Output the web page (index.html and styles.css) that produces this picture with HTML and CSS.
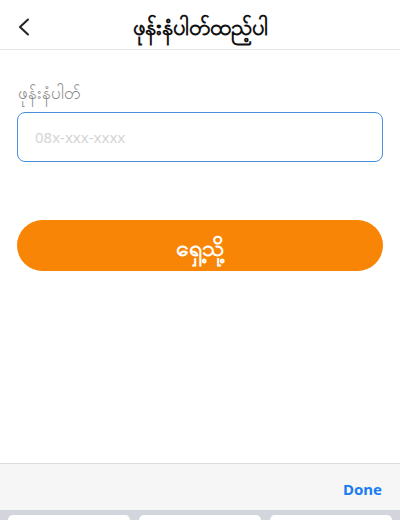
FILE: index.html
```html
<!DOCTYPE html>
<html lang="my">
<head>
<meta charset="utf-8">
<link rel="stylesheet" href="styles.css">
</head>
<body>
<div class="page">
  <header class="header">
    <span class="back">
      <svg width="14" height="18" viewBox="0 0 14 18"><path d="M11 1.5 L3 9 L11 16.5" fill="none" stroke="#222" stroke-width="2" stroke-linecap="round" stroke-linejoin="round"/></svg>
    </span>
    <h1 class="title">ဖုန်းနံပါတ်ထည့်ပါ</h1>
  </header>
  <main class="content">
    <label class="label">ဖုန်းနံပါတ်</label>
    <div class="input">08x-xxx-xxxx</div>
    <button class="btn">ရှေ့သို့</button>
  </main>
  <div class="spacer"></div>
  <div class="toolbar"><span class="done">Done</span></div>
  <div class="keyboard">
    <div class="key"></div>
    <div class="key"></div>
    <div class="key"></div>
  </div>
</div>
</body>
</html>
```
FILE: styles.css
```css
html, body {
  margin: 0;
  padding: 0;
  background: #fff;
}
.page {
  width: 400px;
  height: 520px;
  display: flex;
  flex-direction: column;
  font-family: "Noto Sans", "DejaVu Sans", sans-serif;
  overflow: hidden;
}
.header {
  height: 50px;
  flex: none;
  box-sizing: border-box;
  border-bottom: 1px solid #e6e6e6;
  display: flex;
  align-items: center;
  justify-content: center;
  position: relative;
}
.back {
  position: absolute;
  left: 17px;
  top: 18px;
  display: flex;
}
.title {
  margin: 0;
  font-size: 22px;
  line-height: 30px;
  font-weight: 600;
  color: #111;
  padding-top: 2px;
}
.content {
  padding: 30px 17px 0;
  display: flex;
  flex-direction: column;
}
.label {
  font-size: 17px;
  color: #8a8a8a;
  line-height: 26px;
  height: 26px;
  padding-left: 1px;
}
.input {
  margin-top: 6px;
  height: 50px;
  box-sizing: border-box;
  border: 1.5px solid #4a8fdc;
  border-radius: 8px;
  display: flex;
  align-items: center;
  padding-left: 17px;
  font-size: 15px;
  color: #d4d4d4;
}
.btn {
  margin-top: 58px;
  height: 51px;
  border: none;
  border-radius: 26px;
  background: #f98507;
  color: #fff;
  font-family: inherit;
  font-size: 23px;
  font-weight: 700;
  line-height: 30px;
  padding: 2px 0 0;
}
.spacer {
  flex: 1;
}
.toolbar {
  flex: none;
  height: 46px;
  border-top: 1px solid #dcdcdc;
  background: #f6f6f6;
  display: flex;
  align-items: center;
  justify-content: flex-end;
  padding-right: 18px;
}
.done {
  color: #1a7cf2;
  font-size: 15px;
  font-weight: 700;
  padding-top: 4px;
}
.keyboard {
  flex: none;
  height: 10px;
  background: #d2d5db;
  display: flex;
  gap: 9px;
  padding: 5px 8px 0;
  box-sizing: border-box;
}
.key {
  flex: 1;
  background: #fff;
  border-radius: 5px 5px 0 0;
}
```
